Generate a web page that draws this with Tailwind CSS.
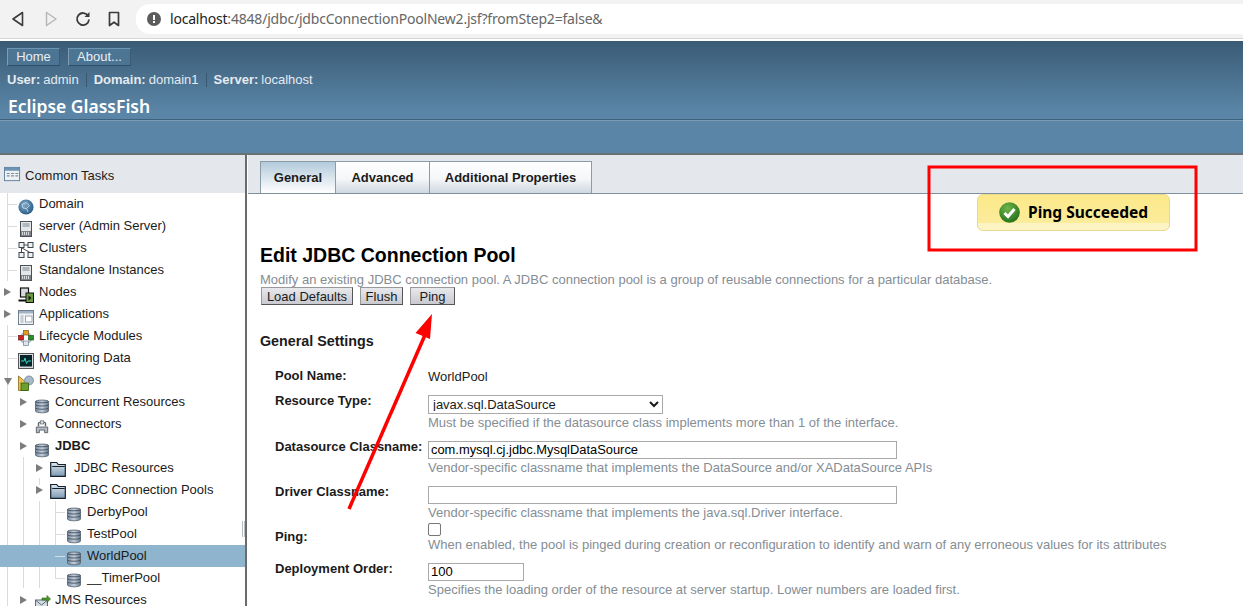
<!DOCTYPE html>
<html lang="en">
  <head>
    <meta charset="UTF-8" />
    <meta name="viewport" content="width=device-width, initial-scale=1.0" />
    <title>Edit JDBC Connection Pool</title>
    <script src="https://cdn.jsdelivr.net/npm/@tailwindcss/browser@4"></script>
  </head>

  <body class="relative h-[606px] w-[1243px] overflow-hidden bg-white font-['Liberation_Sans',Arial,sans-serif] text-[13px] text-[#1b1b1b]">
    <!-- icon sprites -->
    <svg class="absolute h-0 w-0" xmlns="http://www.w3.org/2000/svg">
      <defs>
        <linearGradient id="dbfill" x1="0" x2="1" y1="0" y2="0">
          <stop offset="0" stop-color="#7488a0" />
          <stop offset="0.5" stop-color="#c4cfdb" />
          <stop offset="1" stop-color="#64788f" />
        </linearGradient>
        <linearGradient id="folderfill" x1="0" x2="0" y1="0" y2="1">
          <stop offset="0" stop-color="#dfe7ee" />
          <stop offset="1" stop-color="#7d9ab3" />
        </linearGradient>
        <radialGradient id="globefill" cx="0.4" cy="0.35" r="0.75">
          <stop offset="0" stop-color="#7fa8c9" />
          <stop offset="1" stop-color="#1f5480" />
        </radialGradient>
        <radialGradient id="okfill" cx="0.4" cy="0.3" r="0.8">
          <stop offset="0" stop-color="#6fb54a" />
          <stop offset="1" stop-color="#1b6a17" />
        </radialGradient>
      </defs>
      <symbol id="db" viewBox="0 0 16 16">
        <path d="M1.5 3.5C1.5 1.6 14.5 1.6 14.5 3.5V13C14.5 15.4 1.5 15.4 1.5 13Z" fill="url(#dbfill)" stroke="#56606b" stroke-width="0.8" />
        <path d="M1.5 3.5C1.5 5.2 14.5 5.2 14.5 3.5M1.5 6.7C1.5 8.4 14.5 8.4 14.5 6.7M1.5 9.9C1.5 11.6 14.5 11.6 14.5 9.9" fill="none" stroke="#39434e" stroke-width="0.8" />
      </symbol>
      <symbol id="globe" viewBox="0 0 16 16">
        <circle cx="8" cy="8" r="7.6" fill="url(#globefill)" />
        <path d="M4 5.5 8 3.5 11.5 6.5 8.5 9.5 5 9ZM8.5 9.5 10 13" fill="none" stroke="#c9dcea" stroke-width="0.9" />
      </symbol>
      <symbol id="server" viewBox="0 0 16 16">
        <rect x="2.5" y="0.5" width="11" height="15" fill="#e4e6e8" stroke="#4a4f55" />
        <path d="M4.5 3h7M4.5 5h7" stroke="#7b8794" />
        <rect x="3" y="10" width="10" height="5" fill="#7c8287" />
        <path d="M4.5 11v3M6.5 11v3M8.5 11v3M10.5 11v3" stroke="#d8dadc" />
      </symbol>
      <symbol id="clusters" viewBox="0 0 16 16">
        <g fill="#eef1f4" stroke="#3e454c">
          <rect x="1" y="0.5" width="5" height="5" />
          <rect x="10" y="0.5" width="5" height="5" />
          <rect x="1" y="10.5" width="5" height="5" />
          <rect x="10" y="10.5" width="5" height="5" />
        </g>
        <path d="M6 3h4M4 6l8 4.5M3.5 6v4.5" fill="none" stroke="#3e454c" />
      </symbol>
      <symbol id="nodes" viewBox="0 0 16 16">
        <rect x="2.5" y="1" width="8" height="9" fill="#d7dadd" stroke="#111" stroke-width="1.2" />
        <path d="M0.5 13.5h10" stroke="#111" stroke-width="2" />
        <rect x="8" y="6" width="7.5" height="9.5" fill="#6d9a45" stroke="#111" />
        <path d="M10.5 8.5l3 2.5-3 2.5Z" fill="#111" />
      </symbol>
      <symbol id="apps" viewBox="0 0 16 16">
        <rect x="0.5" y="1.5" width="15" height="14" fill="#f1f3f5" stroke="#6f7f8e" />
        <rect x="1" y="2" width="14" height="2.5" fill="#9fb3c4" />
        <path d="M2.5 7h3M2.5 9h3M2.5 11h3M2.5 13h3" stroke="#9aa6b0" />
        <rect x="7.5" y="7" width="6.5" height="6" fill="#fff" stroke="#9aa6b0" />
      </symbol>
      <symbol id="lifecycle" viewBox="0 0 16 16">
        <circle cx="8" cy="8" r="5.5" fill="none" stroke="#9db0bf" stroke-width="1.3" />
        <rect x="5.5" y="0.5" width="5" height="4.5" fill="#e69a1f" stroke="#7b5a1d" stroke-width="0.7" />
        <rect x="0.5" y="5.5" width="5" height="4.5" fill="#cc2222" stroke="#6b1a1a" stroke-width="0.7" />
        <rect x="10.5" y="5.5" width="5" height="4.5" fill="#2e8b2e" stroke="#1d551d" stroke-width="0.7" />
        <rect x="5.5" y="11" width="5" height="4.5" fill="#dbe6ee" stroke="#6f8394" stroke-width="0.7" />
      </symbol>
      <symbol id="monitor" viewBox="0 0 16 16">
        <rect x="0.5" y="0.5" width="15" height="15" fill="#d9dcdf" stroke="#555" />
        <rect x="2" y="2" width="12" height="11.5" fill="#06262b" />
        <path d="M3 8h3l1-3 1.5 5.5L10 8h3" fill="none" stroke="#39d6c4" />
      </symbol>
      <symbol id="resources" viewBox="0 0 16 16">
        <path d="M0.5 15.5V1l6 5h3v9.5Z" fill="#efc24a" stroke="#8a6a16" stroke-width="0.8" />
        <circle cx="11" cy="5.5" r="4.5" fill="#a7b9c8" stroke="#6f8394" stroke-width="0.8" />
        <rect x="3" y="8" width="7.5" height="7.5" fill="#6aa030" stroke="#335a12" stroke-width="0.8" />
      </symbol>
      <symbol id="connector" viewBox="0 0 16 16">
        <path d="M4 7V3.5C4 2 12 2 12 3.5V7" fill="none" stroke="#5a626a" stroke-width="1.6" />
        <rect x="6" y="1" width="4" height="3.5" fill="#dfe3e6" stroke="#5a626a" stroke-width="0.8" />
        <path d="M1.5 8h13v6.5h-3.5v-3H5v3H1.5Z" fill="#b4bbc2" stroke="#454c53" stroke-width="0.9" />
      </symbol>
      <symbol id="folder" viewBox="0 0 16 16">
        <path d="M0.7 15.3V1.5h6l1.6 2h7v11.8Z" fill="url(#folderfill)" stroke="#15202b" stroke-width="1.2" />
        <path d="M2.2 5.5h12.5" stroke="#15202b" />
      </symbol>
      <symbol id="jms" viewBox="0 0 16 16">
        <rect x="0.5" y="6" width="12" height="9" fill="#d5dde4" stroke="#5d6b78" />
        <path d="M1 6.5 6.5 11 12 6.5" fill="none" stroke="#5d6b78" />
        <path d="M7 4h5V1.5L15.5 5 12 8.5V6H7Z" fill="#4d9a2c" stroke="#2a5f16" stroke-width="0.6" />
      </symbol>
      <symbol id="tasks" viewBox="0 0 18 18">
        <rect x="0.5" y="1.5" width="16" height="14" fill="#eef1f4" stroke="#5f7f9c" />
        <rect x="1" y="2" width="15" height="3" fill="#6d93b4" />
        <path d="M3 8h3M7.5 8h3M12 8h3M3 10.5h3M7.5 10.5h3M12 10.5h3" stroke="#7f8c98" stroke-width="1.2" />
      </symbol>
    </svg>

    <!-- browser toolbar -->
    <div class="mb-[2px] flex h-[39px] items-start border-b border-[#d6d7d8] bg-[#f2f2f2] pt-[4px]">
      <div class="flex h-[30px] w-[136px] items-center">
        <svg class="ml-[11px] h-[16px] w-[14px]" viewBox="0 0 14 16" fill="none" stroke="#3b3b3b" stroke-width="1.6" stroke-linejoin="round"><path d="M11.5 1.5 2 8l9.5 6.5Z" /></svg>
        <svg class="ml-[19px] h-[16px] w-[14px]" viewBox="0 0 14 16" fill="none" stroke="#b5b5b5" stroke-width="1.4" stroke-linejoin="round"><path d="M2.5 1.5 12 8l-9.5 6.5Z" /></svg>
        <svg class="ml-[17px] h-[16px] w-[16px]" viewBox="0 0 16 16" fill="none" stroke="#3b3b3b" stroke-width="1.8"><path d="M13.2 5A6 6 0 1 0 14 8.5" /><path d="M14.5 1v5h-5Z" fill="#3b3b3b" stroke="none" /></svg>
        <svg class="ml-[17px] h-[16px] w-[12px]" viewBox="0 0 12 16" fill="none" stroke="#3b3b3b" stroke-width="1.7" stroke-linejoin="round"><path d="M1.5 1.5h9v13L6 11.2 1.5 14.5Z" /></svg>
      </div>
      <div class="flex h-[30px] flex-1 items-center rounded-l-[14px] bg-white pb-[1px] pl-[11px] font-['Noto_Sans',sans-serif] text-[14px] tracking-[-0.2px]">
        <svg class="h-[14px] w-[14px]" viewBox="0 0 14 14"><circle cx="7" cy="7" r="7" fill="#5c5c5c" /><rect x="6" y="3" width="2" height="5" fill="#fff" /><rect x="6" y="9" width="2" height="2" fill="#fff" /></svg>
        <span class="ml-[9px] text-[#222]">localhost<span class="text-[#666]">:4848/jdbc/jdbcConnectionPoolNew2.jsf?fromStep2=false&amp;</span></span>
      </div>
    </div>

    <!-- masthead -->
    <div class="h-[114px] bg-[linear-gradient(#3a5b76_0px,#5a85a6_70px,#5a85a6_114px)]">
      <div class="flex gap-[8px] pl-[7px] pt-[7px]">
        <div class="flex h-[18px] w-[53px] items-center justify-center border border-t-[#6f94b0] border-r-[#3b5c75] border-b-[#2f4f68] border-l-[#7d9db5] bg-[#4c7594] text-[#e8eef3]">Home</div>
        <div class="flex h-[18px] w-[63px] items-center justify-center border border-t-[#6f94b0] border-r-[#3b5c75] border-b-[#2f4f68] border-l-[#7d9db5] bg-[#4c7594] text-[#e8eef3]">About...</div>
      </div>
      <div class="mt-[6px] flex h-[15px] items-center pl-[7px] text-[#e4ebf1]">
        <b>User:</b><span class="ml-[3px]">admin</span>
        <span class="mx-[7px] h-[14px] w-px bg-[#37566f]"></span>
        <b>Domain:</b><span class="ml-[3px]">domain1</span>
        <span class="mx-[7px] h-[14px] w-px bg-[#37566f]"></span>
        <b>Server:</b><span class="ml-[3px]">localhost</span>
      </div>
      <div class="mt-[6px] pl-[8px] font-['Noto_Sans',sans-serif] text-[17.5px] font-semibold leading-[26px] text-white">Eclipse GlassFish</div>
      <div class="h-[2px] border-t border-b border-t-[#3c627e] border-b-[#7c9bb3]"></div>
      <div class="mt-[32px] h-[2px] bg-[#6a6f74]"></div>
    </div>

    <div class="flex h-[451px]">
      <!-- navigation tree -->
      <div class="relative h-full w-[247px] shrink-0 overflow-hidden border-r-2 border-[#6b6b6b] text-[13px]">
        <div class="flex h-[38px] items-center bg-[#e4e8ed] pl-[4px] pt-[4px]">
          <svg class="-mt-[3px] h-[17px] w-[17px]"><use href="#tasks" /></svg>
          <span class="ml-[4px]">Common Tasks</span>
        </div>

        <!-- tree guides -->
        <span class="absolute left-[7px] top-[38px] h-[88px] w-px bg-[#d9dcdf]"></span>
        <span class="absolute left-[7px] top-[170px] h-[281px] w-px bg-[#d9dcdf]"></span>
        <span class="absolute left-[23px] top-[302px] h-[131px] w-px bg-[#d9dcdf]"></span>
        <span class="absolute left-[39px] top-[323px] h-[7px] w-px bg-[#d9dcdf]"></span>
        <span class="absolute left-[39px] top-[346px] h-[87px] w-px bg-[#d9dcdf]"></span>
        <span class="absolute left-[55px] top-[346px] h-[77px] w-px bg-[#d9dcdf]"></span>

        <div class="relative flex h-[22px] items-center pl-[39px]"><span class="absolute left-[7px] top-[11px] h-px w-[10px] bg-[#d9dcdf]"></span><svg class="absolute left-[18px] top-[6px] h-[16px] w-[16px]"><use href="#globe" /></svg>Domain</div>
        <div class="relative flex h-[22px] items-center pl-[39px]"><span class="absolute left-[7px] top-[11px] h-px w-[10px] bg-[#d9dcdf]"></span><svg class="absolute left-[18px] top-[6px] h-[16px] w-[16px]"><use href="#server" /></svg>server (Admin Server)</div>
        <div class="relative flex h-[22px] items-center pl-[39px]"><span class="absolute left-[7px] top-[11px] h-px w-[10px] bg-[#d9dcdf]"></span><svg class="absolute left-[18px] top-[5px] h-[16px] w-[16px]"><use href="#clusters" /></svg>Clusters</div>
        <div class="relative flex h-[22px] items-center pl-[39px]"><span class="absolute left-[7px] top-[11px] h-px w-[10px] bg-[#d9dcdf]"></span><svg class="absolute left-[18px] top-[6px] h-[16px] w-[16px]"><use href="#server" /></svg>Standalone Instances</div>
        <div class="relative flex h-[22px] items-center pl-[39px]"><span class="absolute left-[4px] top-[7px] border-y-[4px] border-l-[7px] border-y-transparent border-l-[#7d7d7d]"></span><svg class="absolute left-[18px] top-[6px] h-[16px] w-[16px]"><use href="#nodes" /></svg>Nodes</div>
        <div class="relative flex h-[22px] items-center pl-[39px]"><span class="absolute left-[4px] top-[7px] border-y-[4px] border-l-[7px] border-y-transparent border-l-[#7d7d7d]"></span><svg class="absolute left-[18px] top-[6px] h-[16px] w-[16px]"><use href="#apps" /></svg>Applications</div>
        <div class="relative flex h-[22px] items-center pl-[39px]"><span class="absolute left-[7px] top-[11px] h-px w-[10px] bg-[#d9dcdf]"></span><svg class="absolute left-[18px] top-[5px] h-[16px] w-[16px]"><use href="#lifecycle" /></svg>Lifecycle Modules</div>
        <div class="relative flex h-[22px] items-center pl-[39px]"><span class="absolute left-[7px] top-[11px] h-px w-[10px] bg-[#d9dcdf]"></span><svg class="absolute left-[18px] top-[6px] h-[16px] w-[16px]"><use href="#monitor" /></svg>Monitoring Data</div>
        <div class="relative flex h-[22px] items-center pl-[39px]"><span class="absolute left-[4px] top-[9px] border-x-[4px] border-t-[7px] border-x-transparent border-t-[#7d7d7d]"></span><svg class="absolute left-[18px] top-[6px] h-[16px] w-[16px]"><use href="#resources" /></svg>Resources</div>
        <div class="relative flex h-[22px] items-center pl-[55px]"><span class="absolute left-[20px] top-[7px] border-y-[4px] border-l-[7px] border-y-transparent border-l-[#7d7d7d]"></span><svg class="absolute left-[34px] top-[7px] h-[16px] w-[16px]"><use href="#db" /></svg>Concurrent Resources</div>
        <div class="relative flex h-[22px] items-center pl-[55px]"><span class="absolute left-[20px] top-[7px] border-y-[4px] border-l-[7px] border-y-transparent border-l-[#7d7d7d]"></span><svg class="absolute left-[35px] top-[7px] h-[14px] w-[14px]"><use href="#connector" /></svg>Connectors</div>
        <div class="relative flex h-[22px] items-center pl-[55px] font-bold"><span class="absolute left-[20px] top-[7px] border-y-[4px] border-l-[7px] border-y-transparent border-l-[#7d7d7d]"></span><svg class="absolute left-[34px] top-[7px] h-[16px] w-[16px]"><use href="#db" /></svg>JDBC</div>
        <div class="relative flex h-[22px] items-center pl-[74px]"><span class="absolute left-[36px] top-[7px] border-y-[4px] border-l-[7px] border-y-transparent border-l-[#7d7d7d]"></span><svg class="absolute left-[50px] top-[4px] h-[16px] w-[16px]"><use href="#folder" /></svg>JDBC Resources</div>
        <div class="relative flex h-[22px] items-center pl-[74px]"><span class="absolute left-[36px] top-[7px] border-y-[4px] border-l-[7px] border-y-transparent border-l-[#7d7d7d]"></span><svg class="absolute left-[50px] top-[4px] h-[16px] w-[16px]"><use href="#folder" /></svg>JDBC Connection Pools</div>
        <div class="relative flex h-[22px] items-center pl-[87px]"><span class="absolute left-[55px] top-[11px] h-px w-[10px] bg-[#d9dcdf]"></span><svg class="absolute left-[66px] top-[5px] h-[16px] w-[16px]"><use href="#db" /></svg>DerbyPool</div>
        <div class="relative flex h-[22px] items-center pl-[87px]"><span class="absolute left-[55px] top-[11px] h-px w-[10px] bg-[#d9dcdf]"></span><svg class="absolute left-[66px] top-[5px] h-[16px] w-[16px]"><use href="#db" /></svg>TestPool</div>
        <div class="relative flex h-[22px] items-center bg-[#8fb4cd] pl-[87px]"><span class="absolute left-[55px] top-[11px] h-px w-[10px] bg-[#d9dcdf]"></span><svg class="absolute left-[66px] top-[5px] h-[16px] w-[16px]"><use href="#db" /></svg>WorldPool</div>
        <div class="relative flex h-[22px] items-center pl-[87px]"><span class="absolute left-[55px] top-[11px] h-px w-[10px] bg-[#d9dcdf]"></span><svg class="absolute left-[66px] top-[5px] h-[16px] w-[16px]"><use href="#db" /></svg>__TimerPool</div>
        <div class="relative flex h-[22px] items-center pl-[55px]"><span class="absolute left-[20px] top-[7px] border-y-[4px] border-l-[7px] border-y-transparent border-l-[#7d7d7d]"></span><svg class="absolute left-[35px] top-[5px] h-[16px] w-[16px]"><use href="#jms" /></svg>JMS Resources</div>

        <!-- resize grip -->
        <span class="absolute left-[242px] top-[366px] h-[16px] w-[3px] border-x border-[#b9bdc1]"></span>
      </div>

      <!-- content -->
      <div class="relative min-w-0 flex-1 pl-[1px]">
        <div class="flex h-[39px] items-end border-b border-[#7f929e] bg-[#e4e8ed] pl-[12px]">
          <div class="flex h-[32px] w-[76px] items-center justify-center border border-b-0 border-[#8b9ca9] bg-[linear-gradient(#b3cadb,#ffffff)] pt-px font-bold">General</div>
          <div class="-ml-px flex h-[32px] w-[95px] items-center justify-center border border-b-0 border-[#8b9ca9] bg-[linear-gradient(#ffffff,#f4f6f8_55%,#cfd8e0)] pt-px font-bold">Advanced</div>
          <div class="-ml-px flex h-[32px] w-[163px] items-center justify-center border border-b-0 border-[#8b9ca9] bg-[linear-gradient(#ffffff,#f4f6f8_55%,#cfd8e0)] pt-px font-bold">Additional Properties</div>
        </div>

        <!-- alert -->
        <div class="absolute left-[730px] top-[39px] flex h-[37px] w-[193px] items-center rounded-[6px] border border-[#e6d98f] bg-[linear-gradient(#fde98a_0px,#fbec9b_28px,#fdf4c3_28px)] pl-[21px] font-['Noto_Sans',sans-serif] text-[15.5px] font-bold text-black">
          <svg class="h-[21px] w-[21px]" viewBox="0 0 21 21"><circle cx="10.5" cy="10.5" r="10.3" fill="url(#okfill)" /><path d="M5.5 11 9 14.5 15.5 7" fill="none" stroke="#fff" stroke-width="3" /></svg>
          <span class="ml-[8px]">Ping Succeeded</span>
        </div>

        <div class="pl-[12px]">
          <h1 class="mt-[48px] text-[19.5px] font-bold leading-[26px] text-black">Edit JDBC Connection Pool</h1>
          <p class="mt-[4px] leading-[16px] text-[#858d95]">Modify an existing JDBC connection pool. A JDBC connection pool is a group of reusable connections for a particular database.</p>
          <div class="-mt-[1px] flex gap-[7px] pl-[1px]">
            <button class="h-[18px] w-[92px] border border-[#555] border-t-[#999] border-l-[#999] bg-[linear-gradient(#e8e9ec,#c9cad0)] leading-[15px] text-[#1b1b1b]">Load Defaults</button>
            <button class="h-[18px] w-[43px] border border-[#555] border-t-[#999] border-l-[#999] bg-[linear-gradient(#e8e9ec,#c9cad0)] leading-[15px] text-[#1b1b1b]">Flush</button>
            <button class="h-[18px] w-[45px] border border-[#555] border-t-[#999] border-l-[#999] bg-[linear-gradient(#e8e9ec,#c9cad0)] leading-[15px] text-[#1b1b1b]">Ping</button>
          </div>
          <h2 class="mt-[27px] text-[14.3px] font-bold leading-[18px] text-[#1b1b1b]">General Settings</h2>

          <div class="mt-[17px] pl-[15px]">
            <div class="flex h-[22px]">
              <div class="w-[153px] pt-[2px] font-bold leading-[14px]">Pool Name:</div>
              <div class="pt-[3px] leading-[14px]">WorldPool</div>
            </div>
            <div class="mt-[6px] flex">
              <div class="w-[153px] font-bold leading-[12px]">Resource Type:</div>
              <div>
                <select class="block h-[19px] w-[235px] border border-[#a9a9a9] bg-white pb-[2px] text-[13px] leading-[15px] text-[#1b1b1b]">
                  <option>javax.sql.DataSource</option>
                </select>
                <div class="leading-[18px] text-[#858d95]">Must be specified if the datasource class implements more than 1 of the interface.</div>
              </div>
            </div>
            <div class="mt-[9px] flex">
              <div class="w-[153px] font-bold leading-[12px]">Datasource Classname:</div>
              <div>
                <input class="block h-[18px] w-[469px] border border-[#a9a9a9] px-[2px] text-[12.9px] text-black" value="com.mysql.cj.jdbc.MysqlDataSource" />
                <div class="leading-[18px] text-[#858d95]">Vendor-specific classname that implements the DataSource and/or XADataSource APIs</div>
              </div>
            </div>
            <div class="mt-[9px] flex">
              <div class="w-[153px] font-bold leading-[12px]">Driver Classname:</div>
              <div>
                <input class="block h-[18px] w-[469px] border border-[#a9a9a9] px-[2px] text-[13px] text-black" />
                <div class="leading-[18px] text-[#858d95]">Vendor-specific classname that implements the java.sql.Driver interface.</div>
              </div>
            </div>
            <div class="mt-[1px] flex items-center">
              <div class="-mt-[3px] w-[153px] font-bold leading-[14px]">Ping:</div>
              <div>
                <span class="block h-[13px] w-[13px] rounded-[2px] border border-[#767676] bg-white"></span>
                <div class="leading-[18px] text-[#858d95]">When enabled, the pool is pinged during creation or reconfiguration to identify and warn of any erroneous values for its attributes</div>
              </div>
            </div>
            <div class="mt-[9px] flex">
              <div class="w-[153px] font-bold leading-[12px]">Deployment Order:</div>
              <div>
                <input class="block h-[18px] w-[96px] border border-[#a9a9a9] px-[2px] text-[13px] text-black" value="100" />
                <div class="leading-[18px] text-[#858d95]">Specifies the loading order of the resource at server startup. Lower numbers are loaded first.</div>
              </div>
            </div>
          </div>
        </div>
      </div>
    </div>

    <!-- screenshot annotations drawn over the page -->
    <svg class="pointer-events-none absolute left-0 top-0 h-[606px] w-[1243px]" viewBox="0 0 1243 606" fill="none">
      <rect x="929" y="167" width="267" height="83" stroke="#ff0000" stroke-width="3" />
      <path d="M349 509 425 335" stroke="#ff0000" stroke-width="3.5" />
      <path d="M432 314 415.5 333 430 339Z" fill="#ff0000" />
    </svg>
  </body>
</html>
